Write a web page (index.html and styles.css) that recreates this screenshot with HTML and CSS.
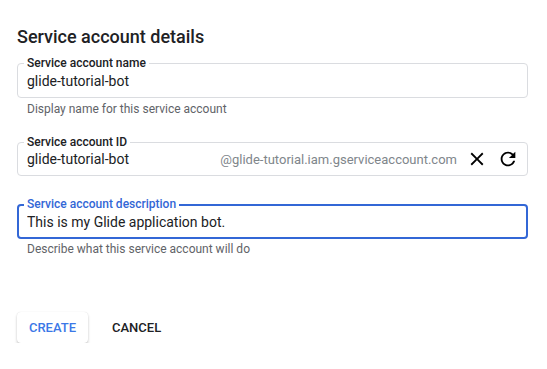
FILE: index.html
```html
<!DOCTYPE html>
<html lang="en">
<head>
  <meta charset="UTF-8">
  <title>Service account details</title>
  <link rel="stylesheet" href="styles.css">
</head>
<body>

  <h2 class="title">Service account details</h2>

  <div class="field first">
    <label class="field-label">Service account name</label>
    <input class="field-input" type="text" value="glide-tutorial-bot">
  </div>
  <div class="hint">Display name for this service account</div>

  <div class="field second">
    <label class="field-label">Service account ID</label>
    <input class="field-input" type="text" value="glide-tutorial-bot">
    <span class="suffix">@glide-tutorial.iam.gserviceaccount.com</span>
    <span class="icon-btn">
      <svg width="22" height="22" viewBox="0 0 24 24"><path d="M19 6.41L17.59 5 12 10.59 6.41 5 5 6.41 10.59 12 5 17.59 6.41 19 12 13.41 17.59 19 19 17.59 13.41 12z" fill="#000"/></svg>
    </span>
    <span class="icon-btn">
      <svg width="22" height="22" viewBox="0 0 24 24"><path d="M17.65 6.35A7.958 7.958 0 0 0 12 4c-4.42 0-7.99 3.58-7.99 8s3.57 8 7.99 8c3.73 0 6.84-2.55 7.73-6h-2.08A5.99 5.99 0 0 1 12 18c-3.31 0-6-2.69-6-6s2.69-6 6-6c1.66 0 3.14.69 4.22 1.78L13 11h7V4l-2.35 2.35z" fill="#000"/></svg>
    </span>
  </div>

  <div class="field third focused">
    <label class="field-label">Service account description</label>
    <input class="field-input" type="text" value="This is my Glide application bot.">
  </div>
  <div class="hint tight">Describe what this service account will do</div>

  <div class="actions">
    <button class="btn raised">Create</button>
    <button class="btn flat">Cancel</button>
  </div>

</body>
</html>
```

FILE: styles.css
```css
body {
  font-family: Roboto, "Liberation Sans", Arial, sans-serif;
  background: #fff;
  margin: 0;
  padding: 25px 19px 0 17px;
  color: #202124;
}
.title {
  margin: 0;
  font-size: 18px;
  line-height: 24px;
  font-weight: 500;
  color: #202124;
}
.field {
  position: relative;
  display: flex;
  align-items: center;
  height: 35px;
  box-sizing: border-box;
  border: 1px solid #dadce0;
  border-radius: 4px;
  padding: 0 8px 0 9px;
}
.field.first {
  margin-top: 14px;
}
.field.second {
  margin-top: 25px;
  height: 34px;
}
.field.third {
  margin-top: 28px;
}
.field.focused {
  border: 2px solid #3367d6;
  padding-left: 8px;
}
.field-label {
  position: absolute;
  top: -9px;
  left: 6px;
  padding: 0 3px;
  background: #fff;
  font-size: 12px;
  line-height: 16px;
  font-weight: 500;
  color: #202124;
}
.field.focused .field-label {
  top: -10px;
  left: 5px;
  color: #3367d6;
}
.field-input {
  flex: 1;
  min-width: 0;
  border: none;
  outline: none;
  padding: 0;
  margin: 0;
  font-family: inherit;
  font-size: 14px;
  line-height: 20px;
  color: #202124;
  background: transparent;
}
.suffix {
  font-size: 13px;
  color: #80868b;
}
.icon-btn {
  display: flex;
  width: 22px;
  height: 22px;
  margin-left: 9px;
}
.hint {
  margin-top: 3px;
  padding-left: 10px;
  font-size: 12px;
  line-height: 16px;
  color: #5f6368;
}
.hint.tight {
  margin-top: 2px;
}
.actions {
  display: flex;
  gap: 8px;
  margin-top: 55px;
}
.btn {
  height: 31px;
  border: none;
  border-radius: 4px;
  font-family: inherit;
  font-size: 13px;
  font-weight: 500;
  text-transform: uppercase;
  background: #fff;
  cursor: pointer;
}
.btn.raised {
  width: 71px;
  padding: 0;
  color: #3b78e7;
  box-shadow: 0 2px 3px rgba(0,0,0,0.2), 0 0 1px rgba(0,0,0,0.15);
}
.btn.flat {
  padding: 0 16px;
  color: #202124;
}
```
